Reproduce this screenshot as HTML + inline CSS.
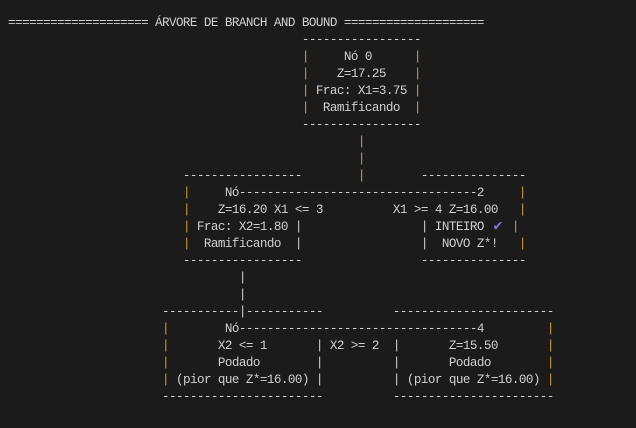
<!DOCTYPE html>
<html><head><meta charset="utf-8"><style>
html,body{margin:0;padding:0;background:#1b1b1b;width:636px;height:428px;overflow:hidden}
pre{position:absolute;left:8px;top:15px;margin:0;font-family:"Liberation Mono","DejaVu Sans Mono",monospace;font-size:12.6px;letter-spacing:-0.56px;line-height:17px;color:#d0d0d0}
.g{color:#d09a3a}
.c{color:#8b6fd6;display:inline-block;width:14px;text-align:center;font-size:15px;letter-spacing:0;line-height:10px}
</style></head><body>
<pre>==================== ÁRVORE DE BRANCH AND BOUND ====================
                                          -----------------
                                          <span class="g">|</span>     Nó 0      <span class="g">|</span>
                                          <span class="g">|</span>    Z=17.25    <span class="g">|</span>
                                          <span class="g">|</span> Frac: X1=3.75 <span class="g">|</span>
                                          <span class="g">|</span>  Ramificando  <span class="g">|</span>
                                          -----------------
                                                  <span class="g">|</span>
                                                  <span class="g">|</span>
                         -----------------        <span class="g">|</span>        ---------------
                         <span class="g">|</span>     Nó----------------------------------2     <span class="g">|</span>
                         <span class="g">|</span>    Z=16.20 X1 &lt;= 3          X1 &gt;= 4 Z=16.00   <span class="g">|</span>
                         <span class="g">|</span> Frac: X2=1.80 |                 | INTEIRO <span class="c">✔</span> <span class="g">|</span>
                         <span class="g">|</span>  Ramificando  |                 |  NOVO Z*!   <span class="g">|</span>
                         -----------------                 ---------------
                                 |
                                 |
                      -----------|-----------          -----------------------
                      <span class="g">|</span>        Nó----------------------------------4         <span class="g">|</span>
                      <span class="g">|</span>       X2 &lt;= 1       | X2 &gt;= 2  |       Z=15.50       <span class="g">|</span>
                      <span class="g">|</span>       Podado        |          |       Podado        <span class="g">|</span>
                      <span class="g">|</span> (pior que Z*=16.00) |          | (pior que Z*=16.00) <span class="g">|</span>
                      -----------------------          -----------------------</pre>
</body></html>
